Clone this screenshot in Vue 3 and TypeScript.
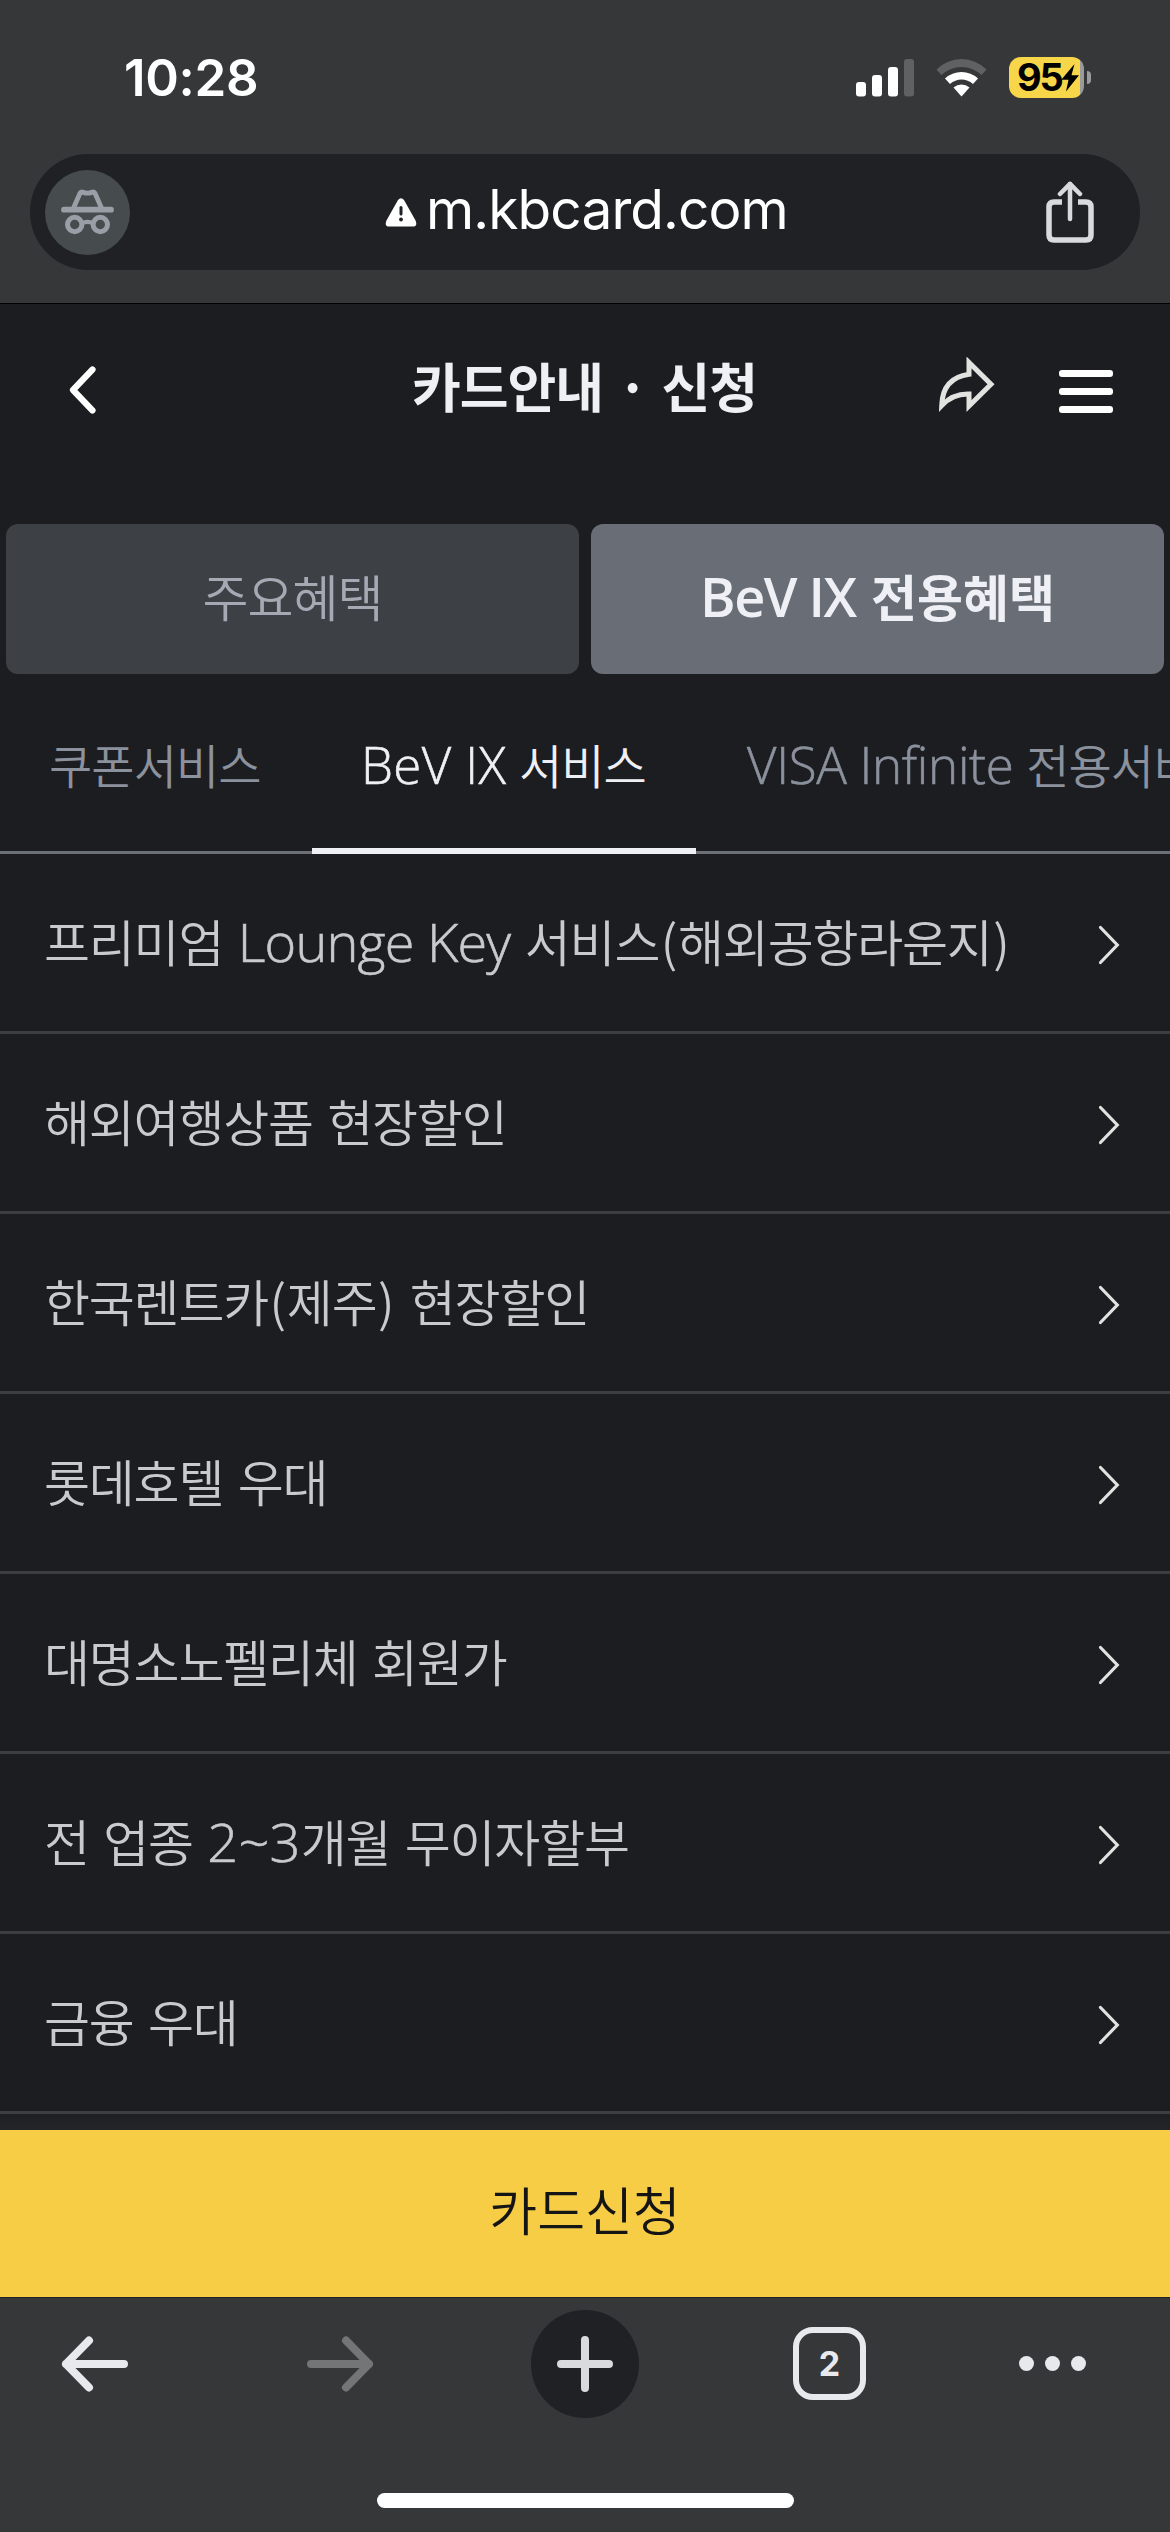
<script setup lang="ts">
interface Segment {
  text: string
  kind?: 'latin' | 'paren' | 'latin digits'
}

interface ServiceRow {
  id: string
  segments: Segment[]
}

const services: ServiceRow[] = [
  {
    id: 'lounge',
    segments: [
      { text: '프리미엄 ' },
      { text: 'Lounge Key', kind: 'latin' },
      { text: ' 서비스' },
      { text: '(', kind: 'paren' },
      { text: '해외공항라운지' },
      { text: ')', kind: 'paren' },
    ],
  },
  { id: 'travel', segments: [{ text: '해외여행상품 현장할인' }] },
  {
    id: 'rentcar',
    segments: [
      { text: '한국렌트카' },
      { text: '(', kind: 'paren' },
      { text: '제주' },
      { text: ')', kind: 'paren' },
      { text: ' 현장할인' },
    ],
  },
  { id: 'lotte', segments: [{ text: '롯데호텔 우대' }] },
  { id: 'sono', segments: [{ text: '대명소노펠리체 회원가' }] },
  {
    id: 'installment',
    segments: [{ text: '전 업종 ' }, { text: '2~3', kind: 'latin digits' }, { text: '개월 무이자할부' }],
  },
  { id: 'finance', segments: [{ text: '금융 우대' }] },
]
</script>

<template>
  <div class="screen">
    <header class="browser-top">
      <div class="status">
        <span class="clock">10:28</span>
        <div class="indicators">
          <svg class="signal" width="58" height="38" viewBox="0 0 58 38">
            <rect x="0" y="23" width="10" height="14.500" rx="3" fill="#fff" />
            <rect x="16" y="16" width="10" height="21.500" rx="3" fill="#fff" />
            <rect x="32" y="8" width="10" height="29.500" rx="3" fill="#fff" />
            <rect x="48" y="0" width="10" height="37.500" rx="3" fill="#606163" />
          </svg>
          <svg class="wifi" width="51" height="38" viewBox="0 0 51 38">
            <path d="M0.500 10.500Q11.500 0 25.500 0Q39.500 0 50.500 10.500L45.500 16Q36.500 8 25.500 8Q14.500 8 5.500 16Z" fill="#606163" />
            <path d="M9 19.500Q16 13 25.500 13Q35 13 42 19.500L37 25Q32 20.500 25.500 20.500Q19 20.500 14 25Z" fill="#fff" />
            <path d="M17.500 28.500Q21 25.500 25.500 25.500Q30 25.500 33.500 28.500L25.500 37.500Z" fill="#fff" />
          </svg>
          <div class="battery">
            <div class="cell">
              <span class="percent">95</span>
              <svg class="bolt" width="18" height="28" viewBox="0 0 18 28">
                <path d="M13.500 0L0.300 15.800H7.500L5 27.500L18 11.300H10.500Z" fill="#000" />
              </svg>
            </div>
            <div class="nub"></div>
          </div>
        </div>
      </div>
      <div class="address">
        <div class="incognito">
          <svg width="53" height="48" viewBox="0 0 53 48" fill="none" stroke="#9a9ea6" stroke-linecap="round" stroke-linejoin="round">
            <path d="M12.500 20L19 5.200Q20 3.300 22 4.200Q26.500 6.200 31 4.200Q33 3.300 34 5.200L40.500 20" stroke-width="4.800" />
            <path d="M3 21.700H50" stroke-width="5.800" />
            <circle cx="13.700" cy="36.500" r="7.200" stroke-width="5" />
            <circle cx="39.300" cy="36.500" r="7.200" stroke-width="5" />
            <path d="M21 35.200Q26.500 32.500 32 35.200" stroke-width="4.200" />
          </svg>
        </div>
        <div class="host">
          <svg width="32" height="29" viewBox="0 0 32 29">
            <path d="M13 2Q16-1.500 19 2L30.500 22.500Q33 28.500 27.500 28.500H4.500Q-1 28.500 1.500 22.500Z" fill="#fff" />
            <path d="M16 9.500V16" stroke="#202125" stroke-width="3" stroke-linecap="round" />
            <circle cx="16" cy="21.500" r="1.900" fill="#202125" />
          </svg>
          <span class="domain">m.kbcard.com</span>
        </div>
        <svg class="export" width="48" height="62" viewBox="0 0 48 62" fill="none" stroke="#d9dade" stroke-linecap="round" stroke-linejoin="round">
          <path d="M16 21H8Q3 21 3 26V54Q3 59 8 59H40Q45 59 45 54V26Q45 21 40 21H32" stroke-width="5.500" stroke-linecap="butt" />
          <path d="M24 3V38" stroke-width="4.500" />
          <path d="M14 13L24 2.800L34 13" stroke-width="4.500" />
        </svg>
      </div>
    </header>

    <main class="page">
      <div class="title-bar">
        <svg class="back" width="28" height="50" viewBox="0 0 28 50">
          <path d="M24.500 4.500L5 25L24.500 45.500" fill="none" stroke="#fff" stroke-width="6.200" stroke-linecap="round" stroke-linejoin="round" />
        </svg>
        <h1 class="title">카드안내 · 신청</h1>
        <div class="actions">
          <svg class="forward" width="56" height="55" viewBox="0 0 56 55">
            <path d="M30 5.500V17.300Q3.500 21 2.700 48.500Q14 36.500 30 37V49L52 27.300Z" fill="none" stroke="#e2e2e0" stroke-width="5" />
          </svg>
          <div class="menu"><i></i><i></i><i></i></div>
        </div>
      </div>

      <nav class="main-tabs">
        <button class="main-tab">주요혜택</button>
        <button class="main-tab selected"><span class="latin">BeV IX</span> 전용혜택</button>
      </nav>

      <nav class="sub-tabs">
        <button class="sub-tab coupon">쿠폰서비스</button>
        <button class="sub-tab current"><span class="latin">BeV IX</span> 서비스</button>
        <button class="sub-tab visa"><span class="latin">VISA Infinite</span> 전용서비스</button>
      </nav>

      <ul class="services">
        <li v-for="row in services" :key="row.id" class="service">
          <span class="label"><span v-for="(part, i) in row.segments" :key="i" :class="part.kind">{{ part.text }}</span></span>
          <svg class="chevron" width="22" height="40" viewBox="0 0 22 40">
            <path d="M2.500 2.500L19.300 20L2.500 37.500" fill="none" stroke="#e2e2e0" stroke-width="3.200" stroke-linecap="round" />
          </svg>
        </li>
      </ul>
      <div class="fade"></div>
      <button class="apply">카드신청</button>
    </main>

    <footer class="toolbar">
      <div class="tools">
        <svg class="go-back" width="68" height="62" viewBox="0 0 68 62" fill="none" stroke="#e8e9ed" stroke-width="8" stroke-linecap="round" stroke-linejoin="round">
          <path d="M63 31H5M28 7.500L5 31L28 54.500" />
        </svg>
        <svg class="go-forward" width="68" height="62" viewBox="0 0 68 62" fill="none" stroke="#747577" stroke-width="8" stroke-linecap="round" stroke-linejoin="round">
          <path d="M5 31H63M40 7.500L63 31L40 54.500" />
        </svg>
        <div class="new-tab">
          <svg width="58" height="58" viewBox="0 0 58 58" stroke="#d9dade" stroke-width="8" stroke-linecap="round">
            <path d="M5 29H53M29 5V53" />
          </svg>
        </div>
        <div class="tab-count">2</div>
        <div class="more"><i></i><i></i><i></i></div>
      </div>
      <div class="home-bar"></div>
    </footer>
  </div>
</template>

<style>
body {
  background: #1c1d21;
}
</style>

<style scoped>
.screen {
  width: 1170px;
  height: 2532px;
  display: flex;
  flex-direction: column;
  overflow: hidden;
  background: #1c1d21;
  font-family: "Noto Sans CJK KR", sans-serif;
  white-space: nowrap;
}
button {
  border: 0;
  padding: 0;
  margin: 0;
  background: none;
  font: inherit;
  color: inherit;
}
svg {
  display: block;
  flex: none;
}
.browser-top {
  box-sizing: border-box;
  height: 304px;
  flex: none;
  background: #363739;
  border-bottom: 1px solid #000;
}
.status {
  box-sizing: border-box;
  height: 154px;
  padding: 57px 79px 0 124px;
  display: flex;
  justify-content: space-between;
}
.clock {
  height: 42px;
  font: 600 51px/42px Inter, sans-serif;
  letter-spacing: -0.3px;
  color: #fff;
}
.indicators {
  display: flex;
  height: 41px;
}
.signal {
  margin: 2px 22px 0 0;
}
.wifi {
  margin: 2px 22px 0 0;
}
.battery {
  display: flex;
  align-items: center;
}
.cell {
  box-sizing: border-box;
  width: 75px;
  height: 41px;
  padding-left: 8px;
  display: flex;
  align-items: center;
  border-radius: 12px;
  background: linear-gradient(90deg, #f8d64a 71px, #9b9b9c 71px);
}
.percent {
  width: 44px;
  font: 700 38px/41px Inter, sans-serif;
  letter-spacing: -2.2px;
  color: #000;
}
.nub {
  width: 4px;
  height: 13px;
  margin-left: 3px;
  border-radius: 0 5px 5px 0;
  background: #9b9b9c;
}
.address {
  box-sizing: border-box;
  height: 116px;
  margin: 0 30px;
  padding: 0 46px 0 15px;
  display: flex;
  align-items: center;
  justify-content: space-between;
  border-radius: 58px;
  background: #202125;
}
.incognito {
  width: 85px;
  height: 85px;
  display: flex;
  align-items: center;
  justify-content: center;
  border-radius: 50%;
  background: #464b4e;
}
.host {
  display: flex;
  align-items: center;
  gap: 9px;
  margin-right: 3px;
}
.domain {
  padding-bottom: 6px;
  font: 400 55px/80px Inter, sans-serif;
  letter-spacing: -0.9px;
  color: #fff;
}
.page {
  flex: none;
  height: 1993px;
}
.title-bar {
  box-sizing: border-box;
  height: 170px;
  padding: 2px 57px 0 68px;
  display: grid;
  grid-template-columns: 186px 1fr 186px;
  align-items: center;
}
.title {
  margin: 0 0 0 -12px;
  padding-bottom: 10px;
  text-align: center;
  font-size: 53px;
  line-height: 80px;
  font-weight: 700;
  color: #eff0f5;
  letter-spacing: -1px;
  word-spacing: 3px;
}
.actions {
  display: flex;
  align-items: center;
  justify-content: flex-end;
  gap: 64px;
}
.forward {
  margin-bottom: 12px;
}
.menu {
  display: flex;
  flex-direction: column;
  gap: 11px;
  padding-top: 3px;
}
.menu i {
  width: 54px;
  height: 7px;
  border-radius: 3px;
  background: #fff;
}
.main-tabs {
  display: flex;
  gap: 12px;
  padding: 50px 6px 0;
}
.main-tab {
  flex: 1;
  height: 150px;
  padding-bottom: 8px;
  border-radius: 12px;
  background: #3d4045;
  font-size: 50px;
  line-height: 70px;
  font-weight: 350;
  letter-spacing: -1px;
  color: #a5a9b3;
}
.main-tab.selected {
  background: #696d75;
  font-weight: 700;
  letter-spacing: 0;
  word-spacing: 4px;
  color: #eff0f5;
}
.sub-tabs {
  box-sizing: border-box;
  height: 180px;
  display: flex;
  overflow: hidden;
  background: linear-gradient(#6b7077, #6b7077) bottom / 100% 3px no-repeat;
  font-size: 47px;
  line-height: 60px;
  font-weight: 350;
  letter-spacing: -0.9px;
  word-spacing: 3px;
  color: #8b919d;
}
.sub-tab {
  box-sizing: border-box;
  flex: none;
  text-align: left;
  letter-spacing: inherit;
  word-spacing: inherit;
}
.coupon {
  width: 312px;
  padding-left: 49px;
}
.current {
  width: 384px;
  padding: 6px 0 0 49px;
  border-bottom: 6px solid #eff0f5;
  color: #eff0f5;
}
.visa {
  padding-left: 51px;
}
.latin {
  font-family: "Open Sans", "Noto Sans", sans-serif;
  font-weight: 300;
  line-height: 1;
  word-spacing: 0;
  -webkit-text-stroke: 0.6px currentColor;
}
.sub-tab .latin {
  font-size: 51px;
  letter-spacing: -0.3px;
}
.current .latin {
  letter-spacing: 0.4px;
}
.main-tab .latin {
  font-size: 54px;
  font-weight: 600;
  letter-spacing: -1.5px;
  -webkit-text-stroke: 0;
}
.services {
  margin: 0;
  padding: 0;
  list-style: none;
}
.service {
  box-sizing: border-box;
  height: 180px;
  padding: 0 50px 0 44px;
  display: flex;
  align-items: center;
  justify-content: space-between;
  border-bottom: 3px solid #3d3e42;
  font-size: 50px;
  line-height: 70px;
  font-weight: 350;
  color: #c8cacf;
}
.label {
  padding-bottom: 5px;
  white-space: pre;
  letter-spacing: -1.2px;
  word-spacing: 4.500px;
}
.label .latin {
  font-size: 54px;
  letter-spacing: -0.8px;
}
.label .digits {
  letter-spacing: 0.3px;
}
.label .paren {
  margin-left: 1.500px;
  letter-spacing: 0.800px;
}
.chevron {
  margin-top: 4px;
}
.fade {
  height: 16px;
  background: linear-gradient(#1e1f23, #242529);
}
.apply {
  display: block;
  width: 100%;
  height: 167px;
  padding-bottom: 10px;
  background: #f6cd45;
  font-size: 52px;
  font-weight: 350;
  color: #151515;
}
.toolbar {
  box-sizing: border-box;
  height: 235px;
  flex: none;
  display: flex;
  flex-direction: column;
  align-items: center;
  border-top: 1px solid #222;
  background: #363739;
}
.tools {
  box-sizing: border-box;
  width: 100%;
  height: 131px;
  padding-left: 61px;
  display: flex;
  align-items: center;
}
.go-forward {
  margin-left: 177px;
}
.new-tab {
  width: 108px;
  height: 108px;
  margin-left: 157px;
  display: flex;
  align-items: center;
  justify-content: center;
  border-radius: 50%;
  background: #202125;
}
.tab-count {
  box-sizing: border-box;
  width: 73px;
  height: 73px;
  margin-left: 154px;
  border: 6.500px solid #e8e9ed;
  border-radius: 20px;
  font: 700 34px/61px Inter, sans-serif;
  text-align: center;
  color: #e8e9ed;
}
.more {
  display: flex;
  gap: 11px;
  margin-left: 153px;
}
.more i {
  width: 15px;
  height: 15px;
  border-radius: 50%;
  background: #e8e9ed;
}
.home-bar {
  width: 417px;
  height: 15px;
  margin-top: 64px;
  border-radius: 8px;
  background: #fff;
}
</style>
